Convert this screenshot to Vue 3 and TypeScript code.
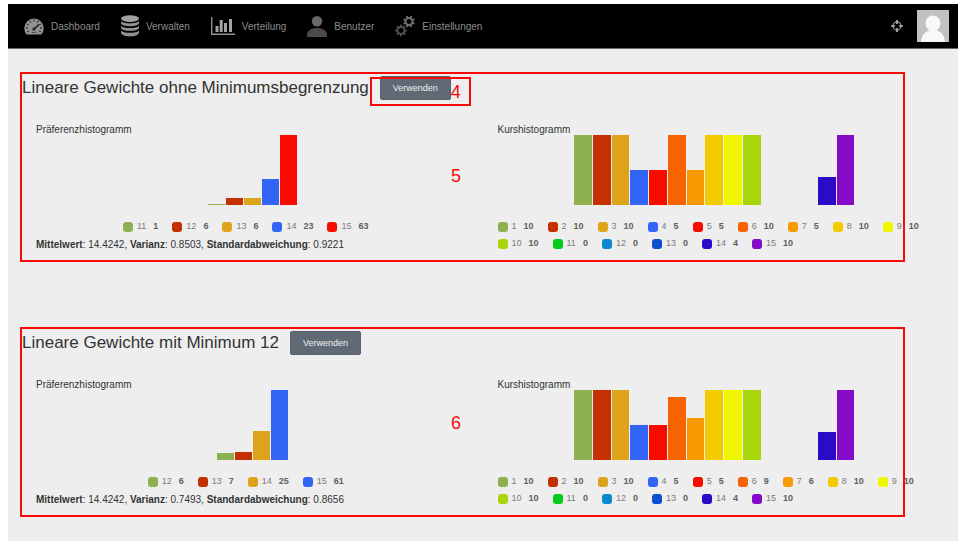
<script setup lang="ts">
interface Bin {
  label: number
  count: number
}

interface Scenario {
  id: string
  title: string
  note: string
  buttonNote?: string
  preferences: Bin[]
  courses: Bin[]
  mean: string
  variance: string
  deviation: string
}

const palette = [
  '#8fb051', '#c43000', '#dda31b', '#3264f6', '#f80c00',
  '#f66300', '#f69a00', '#f2cb00', '#eef600', '#a9d60b',
  '#05cc1b', '#0b89cc', '#0b50cc', '#2a0bc8', '#850bc8',
]

const bins = (first: number, counts: number[]): Bin[] =>
  counts.map((count, i) => ({ label: first + i, count }))

const scenarios: Scenario[] = [
  {
    id: 'linear',
    title: 'Lineare Gewichte ohne Minimumsbegrenzung',
    note: '5',
    buttonNote: '4',
    preferences: bins(11, [1, 6, 6, 23, 63]),
    courses: bins(1, [10, 10, 10, 5, 5, 10, 5, 10, 10, 10, 0, 0, 0, 4, 10]),
    mean: '14.4242',
    variance: '0.8503',
    deviation: '0.9221',
  },
  {
    id: 'minimum',
    title: 'Lineare Gewichte mit Minimum 12',
    note: '6',
    preferences: bins(12, [6, 7, 25, 61]),
    courses: bins(1, [10, 10, 10, 5, 5, 9, 6, 10, 10, 10, 0, 0, 0, 4, 10]),
    mean: '14.4242',
    variance: '0.7493',
    deviation: '0.8656',
  },
]

const charts = (s: Scenario) => [
  { name: 'Präferenzhistogramm', kind: 'preference', data: s.preferences },
  { name: 'Kurshistogramm', kind: 'course', data: s.courses },
]

const share = (bin: Bin, data: Bin[]): string =>
  `${(bin.count / Math.max(...data.map((b) => b.count))) * 100}%`

const teeth = [0, 45, 90, 135, 180, 225, 270, 315]
</script>

<template>
  <div class="shell">
    <header class="topbar">
      <nav class="nav">
        <a class="nav-link" href="#dashboard">
          <svg width="20" height="22" viewBox="0 0 20 22" aria-hidden="true">
            <path d="M2.6 19.5A9.7 9.7 0 1 1 17.4 19.5Z" fill="#929292" />
            <g stroke="#111" stroke-width="1">
              <path d="M10 4.500v2M5.8 5.9l1 1.7M14.2 5.9l-1 1.7M3 9l1.8.9M17 9l-1.8.9M2 13h2M18 13h-2M3.2 16.8l1.7-.8M16.8 16.8l-1.7-.8" />
              <path d="M10 14l5-4.500" stroke-width="1.3" />
            </g>
            <circle cx="10" cy="14" r="1.8" fill="#333" />
            <path d="M7.5 17.5h5" stroke="#555" />
          </svg>
          Dashboard
        </a>
        <a class="nav-link" href="#verwalten">
          <svg width="18" height="22" viewBox="0 0 18 22" aria-hidden="true">
            <ellipse cx="9" cy="3.600" rx="9" ry="3.400" fill="#a0a0a0" />
            <g fill="#929292">
              <path d="M0 6C2 9.200 16 9.200 18 6V8.300C17 12.200 1 12.200 0 8.300Z" />
              <path d="M0 10.700C2 13.900 16 13.900 18 10.700V12.900C17 16.800 1 16.800 0 12.900Z" />
              <path d="M0 15.400C2 18.600 16 18.600 18 15.400V17.700C17 22.600 1 22.600 0 17.700Z" />
            </g>
          </svg>
          Verwalten
        </a>
        <a class="nav-link" href="#verteilung">
          <svg width="24" height="22" viewBox="0 0 24 22" aria-hidden="true">
            <path d="M.7 2v17.3H24" fill="none" stroke="#929292" stroke-width="1.4" />
            <path d="M4.5 11h3v6h-3zM8.7 5h3v12h-3zM13 8h3v9h-3zM18 4h3v13h-3z" fill="#a4a4a4" />
          </svg>
          Verteilung
        </a>
        <a class="nav-link" href="#benutzer">
          <svg width="20" height="22" viewBox="0 0 20 22" aria-hidden="true">
            <circle cx="10" cy="6.200" r="5.200" fill="#686868" />
            <path d="M0 22V19C1.500 11 18.500 11 20 19V22Z" fill="#4a4a4a" />
          </svg>
          Benutzer
        </a>
        <a class="nav-link" href="#einstellungen">
          <svg width="20" height="22" viewBox="0 0 20 22" aria-hidden="true">
            <g transform="translate(14 6.500)" stroke="#737373" fill="none">
              <circle r="3.500" stroke-width="1.8" />
              <path v-for="a in teeth" :key="a" d="M0-4V-5.800" stroke-width="2" :transform="`rotate(${a + 22})`" />
            </g>
            <g transform="translate(6 15.500)" stroke="#505050" fill="none">
              <circle r="3.500" stroke-width="1.8" />
              <path v-for="a in teeth" :key="a" d="M0-4V-5.800" stroke-width="2" :transform="`rotate(${a})`" />
            </g>
          </svg>
          Einstellungen
        </a>
      </nav>
      <div class="account">
        <a class="icon-link" href="#fokus" aria-label="Fokus">
          <svg width="12" height="12" viewBox="0 0 12 12" aria-hidden="true">
            <circle cx="6" cy="6" r="4" fill="none" stroke="#858585" stroke-width="1.3" />
            <path d="M6 0v4M6 8v4M0 6h4M8 6h4" stroke="#b5b5b5" stroke-width="1.6" />
          </svg>
        </a>
        <a class="icon-link" href="#profil" aria-label="Profil">
          <svg width="32" height="32" viewBox="0 0 32 32" aria-hidden="true">
            <path d="M0 0h32v32H0z" fill="#c1c1c1" />
            <path d="M4 32C4.500 25 8 21.500 12.500 20.500C10 18.500 8.500 16 8.500 13A7.500 7.500 0 0 1 23.500 13C23.500 16 22 18.500 19.500 20.500C24 21.500 27.500 25 28 32Z" fill="#f8f8f8" />
          </svg>
        </a>
      </div>
    </header>

    <main class="content">
      <section v-for="s in scenarios" :key="s.id" class="scenario">
        <div class="scenario-head">
          <h2 class="title">{{ s.title }}</h2>
          <div class="action">
            <button class="use" type="button">Verwenden</button>
            <span v-if="s.buttonNote" class="button-frame">{{ s.buttonNote }}</span>
          </div>
        </div>
        <div class="columns">
          <div v-for="c in charts(s)" :key="c.kind" class="column">
            <div class="chart">
              <h3 class="chart-name">{{ c.name }}</h3>
              <div class="bars" :class="c.kind">
                <div
                  v-for="(b, i) in c.data"
                  :key="b.label"
                  class="bar"
                  :style="{ height: share(b, c.data), background: palette[i] }"
                ></div>
              </div>
            </div>
            <ul class="legend" :class="c.kind">
              <li v-for="(b, i) in c.data" :key="b.label" class="entry">
                <span class="swatch" :style="{ background: palette[i] }"></span>
                <span class="key">{{ b.label }}</span>
                <b class="value">{{ b.count }}</b>
              </li>
            </ul>
            <p v-if="c.kind === 'preference'" class="stats">
              <b>Mittelwert</b>: {{ s.mean }}, <b>Varianz</b>: {{ s.variance }},
              <b>Standardabweichung</b>: {{ s.deviation }}
            </p>
          </div>
        </div>
        <div class="frame"></div>
        <span class="note" :class="s.id">{{ s.note }}</span>
      </section>
    </main>
  </div>
</template>

<style>
body {
  margin: 0;
  background: #fff;
}
</style>

<style scoped>
.shell {
  padding: 4px 0 4px 8px;
  font-family: "Liberation Sans", Arial, sans-serif;
  font-size: 10px;
  color: #333;
}

.topbar {
  display: flex;
  align-items: center;
  justify-content: space-between;
  height: 44px;
  padding: 0 9px 0 16px;
  background: #000;
  border-bottom: 1px solid #666;
}

.nav {
  display: flex;
  gap: 21px;
}

.nav-link {
  display: flex;
  align-items: center;
  gap: 7px;
  color: #8c8c8c;
  text-decoration: none;
}

.account {
  display: flex;
  align-items: center;
  gap: 14px;
}

.icon-link {
  display: flex;
}

.content {
  display: flex;
  flex-direction: column;
  gap: 65px;
  padding: 23px 27px 24px 12px;
  background: #eee;
}

.scenario {
  position: relative;
  padding: 4px 0 7px;
}

.scenario-head {
  display: flex;
  align-items: center;
  gap: 11px;
  padding-left: 2px;
  margin-bottom: 23px;
}

.title {
  margin: 0;
  font-size: 17px;
  font-weight: 400;
  line-height: 22px;
}

.action {
  position: relative;
  display: flex;
}

.use {
  height: 24px;
  padding: 0 12px;
  border: 1px solid #59616b;
  border-radius: 2px;
  background: #616974;
  color: #eee;
  font-family: inherit;
  font-size: 9px;
}

.columns {
  display: grid;
  grid-template-columns: 1fr 1fr;
  gap: 28px;
  padding-left: 16px;
}

.column {
  min-width: 0;
}

.chart {
  display: grid;
}

.chart-name {
  grid-area: 1 / 1;
  margin: 0;
  font-size: 10px;
  font-weight: 400;
  line-height: 14px;
}

.bars {
  grid-area: 1 / 1;
  display: flex;
  align-items: flex-end;
  justify-content: center;
  gap: 1px;
  height: 70px;
  margin-top: 12px;
}

.bars.preference .bar {
  width: 17px;
}

.bars.course {
  width: 280px;
  justify-self: center;
}

.bars.course .bar {
  flex: 1;
}

.legend {
  display: flex;
  flex-wrap: wrap;
  column-gap: 14px;
  margin: 13px 0 0;
  padding: 0;
  list-style: none;
  font-size: 9px;
  line-height: 17px;
}

.legend.preference {
  justify-content: center;
  padding-right: 14px;
}

.entry {
  display: flex;
  align-items: center;
}

.swatch {
  width: 10px;
  height: 10px;
  margin-right: 4px;
  border-radius: 3px;
}

.key {
  margin-right: 7px;
  color: #7d7d7d;
}

.value {
  color: #606060;
}

.stats {
  margin: 0;
  line-height: 20px;
}

.frame,
.button-frame {
  position: absolute;
  box-sizing: border-box;
  border: 2px solid #f90a0a;
  pointer-events: none;
}

.frame {
  inset: 0 26px 0 0;
}

.button-frame {
  top: 1px;
  left: -10px;
  width: 101px;
  height: 29px;
  padding-right: 8px;
  text-align: right;
}

.button-frame,
.note {
  color: #f90a0a;
  font-size: 18px;
  line-height: 26px;
}

.note {
  position: absolute;
  left: 431px;
}

.note.linear {
  top: 91px;
}

.note.minimum {
  top: 83px;
}
</style>
